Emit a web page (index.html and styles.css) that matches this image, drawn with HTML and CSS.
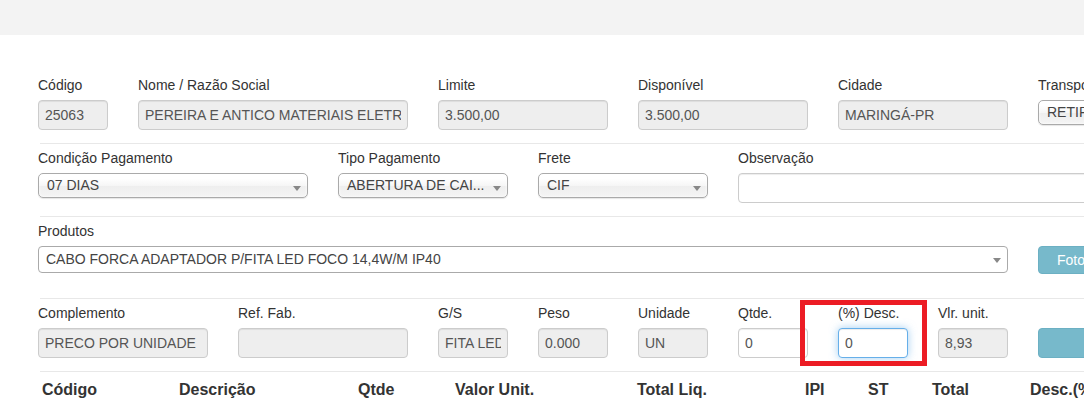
FILE: index.html
```html
<!DOCTYPE html>
<html lang="pt-BR">
<head>
<meta charset="utf-8">
<title>Pedido</title>
<link rel="stylesheet" href="styles.css">
</head>
<body>
<div class="topbar"></div>
<main class="page">
  <div class="row">
    <div class="col w100"><label class="lbl">Código</label><input class="inp ro" value="25063" readonly></div>
    <div class="col w300"><label class="lbl">Nome / Razão Social</label><input class="inp ro" value="PEREIRA E ANTICO MATERIAIS ELETRICOS LTDA" readonly></div>
    <div class="col w200"><label class="lbl">Limite</label><input class="inp ro" value="3.500,00" readonly></div>
    <div class="col w200"><label class="lbl">Disponível</label><input class="inp ro" value="3.500,00" readonly></div>
    <div class="col w200"><label class="lbl">Cidade</label><input class="inp ro" value="MARINGÁ-PR" readonly></div>
    <div class="col w300"><label class="lbl">Transportadora</label><div class="chosen">RETIRA</div></div>
  </div>
  <hr class="sep">
  <div class="row">
    <div class="col w300"><label class="lbl">Condição Pagamento</label><div class="chosen">07 DIAS</div></div>
    <div class="col w200"><label class="lbl">Tipo Pagamento</label><div class="chosen">ABERTURA DE CAI...</div></div>
    <div class="col w200"><label class="lbl">Frete</label><div class="chosen">CIF</div></div>
    <div class="col w500"><label class="lbl">Observação</label><input class="inp" value=""></div>
  </div>
  <hr class="sep">
  <div class="row row-prod">
    <div class="col w1000"><label class="lbl">Produtos</label><div class="select2">CABO FORCA ADAPTADOR P/FITA LED FOCO 14,4W/M IP40</div></div>
    <div class="col w200"><div class="lbl-space"></div><button class="btn btn-foto" type="button">Foto</button></div>
  </div>
  <hr class="sep">
  <div class="row">
    <div class="col w200"><label class="lbl">Complemento</label><input class="inp ro" value="PRECO POR UNIDADE" readonly></div>
    <div class="col w200"><label class="lbl">Ref. Fab.</label><input class="inp ro" value="" readonly></div>
    <div class="col w100"><label class="lbl">G/S</label><input class="inp ro" value="FITA LED" readonly></div>
    <div class="col w100"><label class="lbl">Peso</label><input class="inp ro" value="0.000" readonly></div>
    <div class="col w100"><label class="lbl">Unidade</label><input class="inp ro" value="UN" readonly></div>
    <div class="col w100"><label class="lbl">Qtde.</label><input class="inp" value="0"></div>
    <div class="col w100"><label class="lbl">(%) Desc.</label><input class="inp focus" value="0"></div>
    <div class="col w100"><label class="lbl">Vlr. unit.</label><input class="inp ro" value="8,93" readonly></div>
    <div class="col w200"><div class="lbl-space"></div><button class="btn btn-add" type="button"></button></div>
  </div>
  <hr class="sep">
  <div class="thead">
    <div>Código</div>
    <div>Descrição</div>
    <div>Qtde</div>
    <div>Valor Unit.</div>
    <div>Total Liq.</div>
    <div>IPI</div>
    <div>ST</div>
    <div>Total</div>
    <div>Desc.(%)</div>
  </div>
  <div class="mark"></div>
</main>
</body>
</html>
```
FILE: styles.css
```css
* { box-sizing: border-box; }
html, body { margin: 0; padding: 0; overflow: hidden; }
body {
  width: 1084px;
  height: 417px;
  font-family: "Liberation Sans", Arial, sans-serif;
  font-size: 14px;
  color: #333;
  background: #fff;
}
.topbar { height: 35px; background: #f3f3f3; }
.page { position: relative; width: 1500px; padding: 41px 0 0 23px; }
.row { display: flex; align-items: flex-start; }
.col { flex: none; padding: 0 15px; }
.w100 { width: 100px; }
.w200 { width: 200px; }
.w300 { width: 300px; }
.w500 { width: 500px; }
.w1000 { width: 1000px; }
.lbl { display: block; height: 20px; line-height: 18px; margin-bottom: 4px; font-weight: normal; white-space: nowrap; }
.lbl-space { height: 24px; }
.inp {
  display: block;
  width: 100%;
  height: 30px;
  padding: 0 6px;
  border: 1px solid #ccc;
  border-radius: 4px;
  font: 14px "Liberation Sans", Arial, sans-serif;
  color: #555;
  background: #fff;
  box-shadow: inset 0 1px 1px rgba(0,0,0,.075);
  outline: none;
}
.ro { background: #eee; }
.focus { border-color: #66afe9; box-shadow: inset 0 1px 1px rgba(0,0,0,.075), 0 0 8px rgba(102,175,233,.6); }
.chosen {
  position: relative;
  height: 25px;
  line-height: 23px;
  padding: 0 26px 0 8px;
  border: 1px solid #aaa;
  border-radius: 5px;
  background: linear-gradient(#fff 20%, #f6f6f6 50%, #eee 52%, #f4f4f4 100%);
  box-shadow: inset 0 0 3px #fff, 0 1px 1px rgba(0,0,0,.1);
  color: #444;
  white-space: nowrap;
  overflow: hidden;
}
.chosen::after {
  content: "";
  position: absolute;
  right: 6px;
  top: 12px;
  border-left: 4px solid transparent;
  border-right: 4px solid transparent;
  border-top: 5px solid #888;
}
.select2 {
  position: relative;
  height: 27px;
  line-height: 25px;
  padding: 0 24px 0 7px;
  border: 1px solid #aaa;
  border-radius: 4px;
  background: #fff;
  color: #444;
  white-space: nowrap;
  overflow: hidden;
}
.select2::after {
  content: "";
  position: absolute;
  right: 6px;
  top: 11px;
  border-left: 4px solid transparent;
  border-right: 4px solid transparent;
  border-top: 5px solid #888;
}
.row-prod { padding-bottom: 11px; }
.btn {
  display: block;
  width: 110px;
  border: 1px solid #6cb0c3;
  border-radius: 4px;
  background: #77b9cb;
  color: #fff;
  font: 14px "Liberation Sans", Arial, sans-serif;
  text-align: left;
  padding: 0 0 0 18px;
}
.btn-foto { height: 28px; line-height: 26px; }
.btn-add { height: 30px; }
.sep { border: 0; border-top: 1px solid #e8e8e8; height: 0; margin: 13px 0 5px 17px; }
.thead {
  display: grid;
  grid-template-columns: 137px 179px 97px 182px 168px 63px 64px 98px 150px;
  margin-left: 11px;
  padding-top: 1px;
  font-size: 16px;
  font-weight: 700;
  line-height: 23px;
  color: #333;
}
.thead > div { padding: 0 8px; white-space: nowrap; }
.mark {
  position: absolute;
  left: 800px;
  top: 265px;
  width: 127px;
  height: 66px;
  border: 5px solid #ec1c24;
}
```
